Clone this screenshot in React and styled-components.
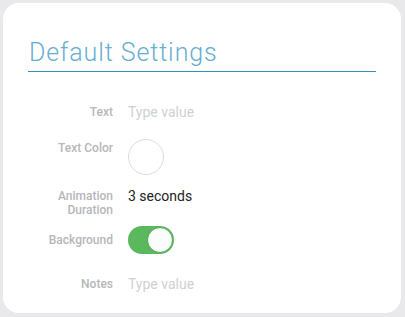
import React from "react";
import styled, { createGlobalStyle } from "styled-components";

const Global = createGlobalStyle`
  html, body { margin: 0; padding: 0; background: #e9e9eb; }
  body { font-family: Roboto, "Liberation Sans", sans-serif; }
`;

const Page = styled.div`
  padding: 3px 4px 4px 3px;
`;

const Card = styled.div`
  background: #fff;
  border-radius: 16px;
  height: 310px;
  box-sizing: border-box;
  padding: 35px 25px 0 25px;
`;

const Title = styled.h1`
  margin: 0;
  font-size: 25px;
  line-height: 29px;
  font-weight: 300;
  letter-spacing: 0.9px;
  color: #67aed0;
  padding: 0 0 4px 1px;
  border-bottom: 1.5px solid #3291b5;
`;

const Form = styled.div`
  display: flex;
  flex-direction: column;
`;

const Row = styled.div`
  display: grid;
  grid-template-columns: 85px 1fr;
  column-gap: 15px;
  align-items: ${(p) => (p.$center ? "center" : "start")};
  margin-top: ${(p) => p.$mt}px;
`;

const Label = styled.div`
  text-align: right;
  font-size: 12px;
  line-height: ${(p) => p.$lh || 16}px;
  padding-top: ${(p) => p.$pt || 0}px;
  font-weight: 500;
  color: #b6b6bb;
`;

const Placeholder = styled.div`
  font-size: 14px;
  line-height: 20px;
  color: #cfd0d4;
`;

const Value = styled.div`
  font-size: 14px;
  line-height: 14px;
  color: #222;
`;

const Swatch = styled.div`
  width: 34px;
  height: 34px;
  border-radius: 50%;
  border: 1px solid #dcdcdf;
  background: #fff;
`;

const Toggle = styled.div`
  width: 46px;
  height: 28px;
  border-radius: 14px;
  background: #5cb85c;
  position: relative;
`;

const Knob = styled.div`
  position: absolute;
  right: 1px;
  top: 1px;
  width: 24px;
  height: 24px;
  border-radius: 50%;
  background: #fbfdfc;
  border: 1px solid #4fa64f;
`;

export default function App() {
  return (
    <Page>
      <Global />
      <Card>
        <Title>Default Settings</Title>
        <Form>
          <Row $mt={29.5} $center>
            <Label>Text</Label>
            <Placeholder>Type value</Placeholder>
          </Row>
          <Row $mt={17}>
            <Label $pt={1}>Text Color</Label>
            <Swatch />
          </Row>
          <Row $mt={14}>
            <Label $lh={14}>Animation Duration</Label>
            <Value>3 seconds</Value>
          </Row>
          <Row $mt={9} $center>
            <Label>Background</Label>
            <Toggle>
              <Knob />
            </Toggle>
          </Row>
          <Row $mt={20} $center>
            <Label>Notes</Label>
            <Placeholder>Type value</Placeholder>
          </Row>
        </Form>
      </Card>
    </Page>
  );
}
